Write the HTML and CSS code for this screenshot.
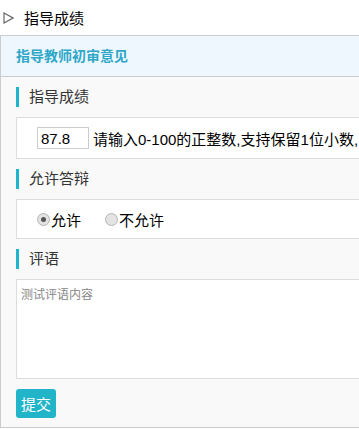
FILE: index.html
```html
<!DOCTYPE html>
<html>
<head>
<meta charset="UTF-8">
<title>指导成绩</title>
<link rel="stylesheet" href="styles.css">
</head>
<body>
	<div class="crumb">
		<svg class="crumb-icon" width="11" height="12" viewBox="0 0 11 12"><polygon points="1,1 10,6 1,11" fill="none" stroke="#666" stroke-width="1.2"/></svg>
		<span>指导成绩</span>
	</div>
	<div class="panel">
		<div class="panel-head">指导教师初审意见</div>
		<div class="panel-body">
			<div class="label">指导成绩</div>
			<div class="box score-box">
				<input class="score" type="text" value="87.8">
				<span class="hint">请输入0-100的正整数,支持保留1位小数,</span>
			</div>
			<div class="label">允许答辩</div>
			<div class="box radio-box">
				<label class="radio"><span class="dot checked"></span>允许</label>
				<label class="radio"><span class="dot"></span>不允许</label>
			</div>
			<div class="label">评语</div>
			<textarea class="remark" placeholder="测试评语内容"></textarea>
			<button class="submit" type="button">提交</button>
		</div>
	</div>
</body>
</html>
```
FILE: styles.css
```css
body
{
	margin: 0;
	overflow: hidden;
	font-family: "Liberation Sans", "Noto Sans CJK SC", sans-serif;
	font-size: 15px;
	color: #333;
	background: #fff;
}

.crumb
{
	height: 35px;
	display: flex;
	align-items: center;
	padding-left: 3px;
	color: #000;
	font-size: 15px;
}

.crumb-icon
{
	margin-right: 10px;
}

.panel
{
	width: 700px;
	border: 1px solid #ccc;
	background: #f9f9f9;
}

.panel-head
{
	height: 40px;
	line-height: 40px;
	padding-left: 15px;
	background: #eef7fd;
	border-bottom: 1px solid #ccc;
	color: #2ea7c9;
	font-size: 14px;
	font-weight: bold;
}

.panel-body
{
	padding: 10px 0 9px 15px;
}

.label
{
	height: 20px;
	line-height: 20px;
	border-left: 3px solid #1eb4cb;
	padding-left: 10px;
	margin-bottom: 10px;
}

.box
{
	background: #fff;
	border: 1px solid #ddd;
	margin-bottom: 10px;
	display: flex;
	align-items: center;
	padding-left: 20px;
}

.score-box
{
	height: 40px;
}

.score
{
	width: 52px;
	height: 22px;
	box-sizing: border-box;
	border: 1px solid #ccc;
	padding: 0 3px;
	font-family: "Liberation Sans", sans-serif;
	font-size: 15px;
	color: #000;
	outline: none;
}

.hint
{
	margin-left: 4px;
	color: #000;
	white-space: nowrap;
}

.radio-box
{
	height: 38px;
}

.radio
{
	display: flex;
	align-items: center;
	color: #000;
	margin-right: 24px;
}

.dot
{
	width: 11px;
	height: 11px;
	border: 1px solid #b5b5b5;
	border-radius: 50%;
	background: #e3e3e3;
	margin-right: 1px;
	position: relative;
}

.dot.checked::after
{
	content: "";
	position: absolute;
	left: 3px;
	top: 3px;
	width: 5px;
	height: 5px;
	border-radius: 50%;
	background: #555;
}

.remark
{
	display: block;
	width: 680px;
	height: 100px;
	box-sizing: border-box;
	border: 1px solid #ddd;
	padding: 5px 4px;
	margin: 0 0 10px;
	resize: none;
	font-family: "Liberation Sans", "Noto Sans CJK SC", sans-serif;
	font-size: 12px;
	outline: none;
}

.remark::placeholder
{
	color: #888;
}

.submit
{
	display: block;
	width: 40px;
	height: 29px;
	padding: 0;
	border: none;
	border-radius: 3px;
	background: #22b4c9;
	color: #fff;
	font-family: "Noto Sans CJK SC", sans-serif;
	font-size: 15px;
}
```
